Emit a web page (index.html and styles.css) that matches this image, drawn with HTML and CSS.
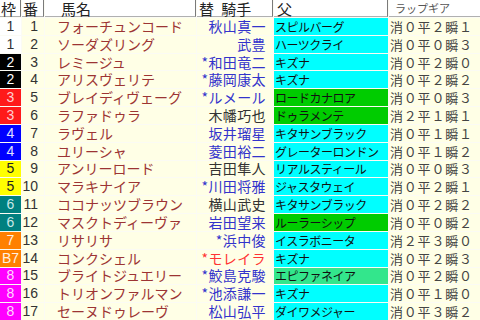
FILE: index.html
```html
<!DOCTYPE html>
<html lang="ja">
<head>
<meta charset="utf-8">
<title>出馬表</title>
<link rel="stylesheet" href="styles.css">
</head>
<body>
<div class="table">
  <div class="row head">
    <div class="cell h-waku">枠</div>
    <div class="cell h-num">番</div>
    <div class="cell h-name">馬名</div>
    <div class="cell h-jockey">替 騎手</div>
    <div class="cell h-sire">父</div>
    <div class="cell h-gear">ラップギア</div>
  </div>

  <div class="row">
    <div class="cell waku w1">1</div><div class="cell num">1</div><div class="cell name">フォーチュンコード</div>
    <div class="cell jockey blue">秋山真一</div><div class="cell sire cyan">スピルバーグ</div><div class="cell gear">消０平２瞬１</div>
  </div>
  <div class="row">
    <div class="cell waku w1">1</div><div class="cell num">2</div><div class="cell name">ソーダズリング</div>
    <div class="cell jockey blue">武豊</div><div class="cell sire cyan">ハーツクライ</div><div class="cell gear">消０平０瞬３</div>
  </div>
  <div class="row">
    <div class="cell waku w2">2</div><div class="cell num">3</div><div class="cell name">レミージュ</div>
    <div class="cell jockey blue">*和田竜二</div><div class="cell sire cyan">キズナ</div><div class="cell gear">消０平２瞬０</div>
  </div>
  <div class="row">
    <div class="cell waku w2">2</div><div class="cell num">4</div><div class="cell name">アリスヴェリテ</div>
    <div class="cell jockey blue">*藤岡康太</div><div class="cell sire cyan">キズナ</div><div class="cell gear">消０平２瞬２</div>
  </div>
  <div class="row">
    <div class="cell waku w3">3</div><div class="cell num">5</div><div class="cell name">ブレイディヴェーグ</div>
    <div class="cell jockey blue">*ルメール</div><div class="cell sire green">ロードカナロア</div><div class="cell gear">消０平０瞬３</div>
  </div>
  <div class="row">
    <div class="cell waku w3">3</div><div class="cell num">6</div><div class="cell name">ラファドゥラ</div>
    <div class="cell jockey dark">木幡巧也</div><div class="cell sire green">ドゥラメンテ</div><div class="cell gear">消２平１瞬１</div>
  </div>
  <div class="row">
    <div class="cell waku w4">4</div><div class="cell num">7</div><div class="cell name">ラヴェル</div>
    <div class="cell jockey blue">坂井瑠星</div><div class="cell sire cyan">キタサンブラック</div><div class="cell gear">消０平１瞬１</div>
  </div>
  <div class="row">
    <div class="cell waku w4">4</div><div class="cell num">8</div><div class="cell name">ユリーシャ</div>
    <div class="cell jockey blue">菱田裕二</div><div class="cell sire cyan">グレーターロンドン</div><div class="cell gear">消０平１瞬２</div>
  </div>
  <div class="row">
    <div class="cell waku w5">5</div><div class="cell num">9</div><div class="cell name">アンリーロード</div>
    <div class="cell jockey dark">吉田隼人</div><div class="cell sire cyan">リアルスティール</div><div class="cell gear">消０平０瞬３</div>
  </div>
  <div class="row">
    <div class="cell waku w5">5</div><div class="cell num">10</div><div class="cell name">マラキナイア</div>
    <div class="cell jockey blue">*川田将雅</div><div class="cell sire cyan">ジャスタウェイ</div><div class="cell gear">消０平２瞬１</div>
  </div>
  <div class="row">
    <div class="cell waku w6">6</div><div class="cell num">11</div><div class="cell name">ココナッツブラウン</div>
    <div class="cell jockey dark">横山武史</div><div class="cell sire cyan">キタサンブラック</div><div class="cell gear">消０平２瞬２</div>
  </div>
  <div class="row">
    <div class="cell waku w6">6</div><div class="cell num">12</div><div class="cell name">マスクトディーヴァ</div>
    <div class="cell jockey blue">岩田望来</div><div class="cell sire green">ルーラーシップ</div><div class="cell gear">消０平０瞬２</div>
  </div>
  <div class="row">
    <div class="cell waku w7">7</div><div class="cell num">13</div><div class="cell name">リサリサ</div>
    <div class="cell jockey blue">*浜中俊</div><div class="cell sire cyan">イスラボニータ</div><div class="cell gear">消２平３瞬０</div>
  </div>
  <div class="row">
    <div class="cell waku w7">B7</div><div class="cell num">14</div><div class="cell name">コンクシェル</div>
    <div class="cell jockey red">*モレイラ</div><div class="cell sire cyan">キズナ</div><div class="cell gear">消０平２瞬３</div>
  </div>
  <div class="row">
    <div class="cell waku w8">8</div><div class="cell num">15</div><div class="cell name">ブライトジュエリー</div>
    <div class="cell jockey blue">*鮫島克駿</div><div class="cell sire mint">エピファネイア</div><div class="cell gear">消０平２瞬０</div>
  </div>
  <div class="row">
    <div class="cell waku w8">8</div><div class="cell num">16</div><div class="cell name">トリオンファルマン</div>
    <div class="cell jockey blue">*池添謙一</div><div class="cell sire cyan">キズナ</div><div class="cell gear">消０平１瞬０</div>
  </div>
  <div class="row">
    <div class="cell waku w8">8</div><div class="cell num">17</div><div class="cell name">セーヌドゥレーヴ</div>
    <div class="cell jockey blue">松山弘平</div><div class="cell sire cyan">ダイワメジャー</div><div class="cell gear">消０平３瞬２</div>
  </div>
</div>
</body>
</html>
```

FILE: styles.css
```css
html, body {
  margin: 0;
  padding: 0;
  background: #ffffe6;
}

.table {
  width: 480px;
  height: 320px;
  display: grid;
  grid-template-columns: 21px 22px 151px 76px 114px 1fr;
  grid-template-rows: 17px repeat(17, 1fr);
  gap: 1px;
  background: #fbfbf4;
  font-family: "Noto Sans CJK JP", "Noto Sans", sans-serif;
}

.row {
  display: contents;
}

.cell {
  display: flex;
  align-items: center;
  white-space: nowrap;
  min-width: 0;
  line-height: 15px;
  background: #ffffe6;
}

/* header */
.head .cell {
  background: #ffffff;
  color: #222;
  font-size: 15px;
  border-right: 1px solid #7a7a7a;
  border-bottom: 1px solid #b0b0b0;
  padding-left: 1px;
}
.head .h-name { padding-left: 16px; }
.head .h-jockey { padding-left: 2px; word-spacing: 4px; }
.head .h-sire { padding-left: 3px; }
.head .h-gear {
  border-right: none;
  font-size: 11px;
  color: #555;
  padding-left: 6px;
}

/* waku column */
.waku {
  justify-content: center;
  font-size: 14px;
  font-family: "Liberation Sans", "Noto Sans", sans-serif;
}
.w1 { background: #ffffff; color: #333; }
.w2 { background: #000000; color: #ffffff; }
.w3 { background: #ff1a1a; color: #ffd0d0; }
.w4 { background: #0000ff; color: #e0e0ff; }
.w5 { background: #ffff00; color: #222; }
.w6 { background: #008080; color: #c8e8e8; }
.w7 { background: #ff8000; color: #fff0e0; }
.w8 { background: #ff00ff; color: #ffd8ff; }

/* number column */
.num {
  justify-content: flex-end;
  padding-right: 6px;
  font-size: 14px;
  color: #333;
  font-family: "Liberation Sans", "Noto Sans", sans-serif;
}

/* horse name */
.name {
  padding-left: 12px;
  font-size: 14px;
  color: #9c3434;
}

/* jockey */
.jockey {
  justify-content: flex-end;
  padding-right: 7px;
  font-size: 14px;
  letter-spacing: 0.4px;
}
.blue { color: #3333cc; }
.dark { color: #333333; }
.red { color: #ff3333; }

/* sire */
.sire {
  padding-left: 1px;
  font-size: 12px;
  letter-spacing: -0.5px;
  color: #111;
}
.cyan { background: #00ffff; }
.green { background: #00cc00; }
.mint { background: #33e68c; }

/* lap gear */
.gear {
  padding-left: 1px;
  font-size: 13px;
  letter-spacing: 0.8px;
  color: #444;
}
```
